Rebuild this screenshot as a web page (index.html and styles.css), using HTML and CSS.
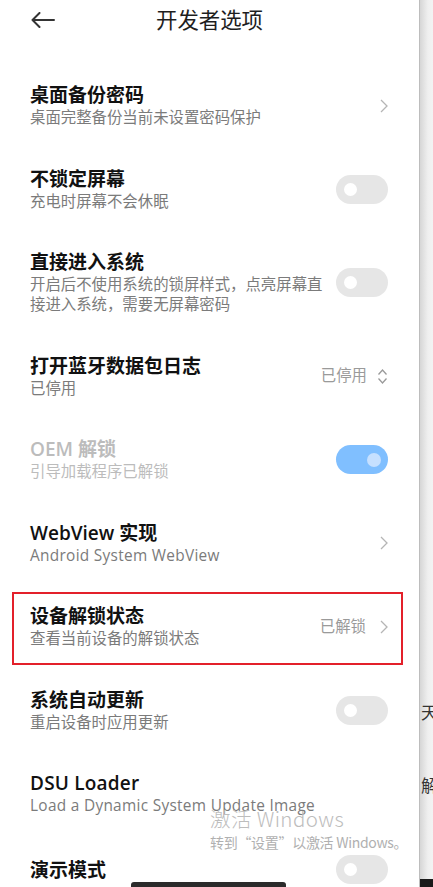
FILE: index.html
```html
<!DOCTYPE html>
<html lang="zh-CN">
<head>
<meta charset="utf-8">
<title>开发者选项</title>
<link rel="stylesheet" href="styles.css">
</head>
<body>
<div class="screen">
  <div class="phone">
    <header class="header">
      <svg class="back" width="24" height="16" viewBox="0 0 24 16"><path d="M1.5 8 H23 M8.5 1 L1.5 8 L8.5 15" fill="none" stroke="#333" stroke-width="2" stroke-linecap="round" stroke-linejoin="round"/></svg>
      <h1 class="title">开发者选项</h1>
    </header>
    <div class="list">
      <div class="row">
        <div class="text"><div class="t">桌面备份密码</div><div class="s">桌面完整备份当前未设置密码保护</div></div>
        <svg class="chev" width="8" height="14" viewBox="0 0 8 14"><path d="M1 1 L7 7 L1 13" fill="none" stroke="#b5b5b5" stroke-width="1.3"/></svg>
      </div>
      <div class="row">
        <div class="text"><div class="t">不锁定屏幕</div><div class="s">充电时屏幕不会休眠</div></div>
        <div class="toggle"><span class="knob"></span></div>
      </div>
      <div class="row">
        <div class="text"><div class="t">直接进入系统</div><div class="s">开启后不使用系统的锁屏样式，点亮屏幕直接进入系统，需要无屏幕密码</div></div>
        <div class="toggle"><span class="knob"></span></div>
      </div>
      <div class="row">
        <div class="text"><div class="t">打开蓝牙数据包日志</div><div class="s">已停用</div></div>
        <div class="value">已停用</div>
        <svg class="updown" width="11" height="17" viewBox="0 0 11 17"><path d="M1.5 6.5 L5.5 2 L9.5 6.5 M1.5 10.5 L5.5 15 L9.5 10.5" fill="none" stroke="#9a9a9a" stroke-width="1.3"/></svg>
      </div>
      <div class="row disabled">
        <div class="text"><div class="t">OEM 解锁</div><div class="s">引导加载程序已解锁</div></div>
        <div class="toggle on"><span class="knob"></span></div>
      </div>
      <div class="row">
        <div class="text"><div class="t">WebView 实现</div><div class="s latin">Android System WebView</div></div>
        <svg class="chev" width="8" height="14" viewBox="0 0 8 14"><path d="M1 1 L7 7 L1 13" fill="none" stroke="#b5b5b5" stroke-width="1.3"/></svg>
      </div>
      <div class="row marked">
        <div class="text"><div class="t">设备解锁状态</div><div class="s">查看当前设备的解锁状态</div></div>
        <div class="value">已解锁</div>
        <svg class="chev" width="8" height="14" viewBox="0 0 8 14"><path d="M1 1 L7 7 L1 13" fill="none" stroke="#b5b5b5" stroke-width="1.3"/></svg>
        <span class="redbox"></span>
      </div>
      <div class="row">
        <div class="text"><div class="t">系统自动更新</div><div class="s">重启设备时应用更新</div></div>
        <div class="toggle"><span class="knob"></span></div>
      </div>
      <div class="row">
        <div class="text"><div class="t latin-t">DSU Loader</div><div class="s latin">Load a Dynamic System Update Image</div></div>
      </div>
      <div class="row single">
        <div class="text"><div class="t">演示模式</div></div>
        <div class="toggle"><span class="knob"></span></div>
      </div>
    </div>
    <div class="watermark">
      <div class="wm1">激活 Windows</div>
      <div class="wm2">转到“设置”以激活 Windows。</div>
    </div>
    <div class="homebar"></div>
  </div>
  <div class="side">
    <span class="side-ch c1">天</span>
    <span class="side-ch c2">解</span>
    <span class="side-black"></span>
  </div>
</div>
</body>
</html>
```
FILE: styles.css
```css
* { box-sizing: border-box; }
html, body {
  margin: 0;
  padding: 0;
  width: 433px;
  height: 887px;
  overflow: hidden;
  background: #fff;
  font-family: "Open Sans", "Noto Sans CJK SC", sans-serif;
}
.screen {
  display: flex;
  width: 433px;
  height: 887px;
}
.phone {
  position: relative;
  width: 419px;
  height: 887px;
  overflow: hidden;
  background: #fff;
}
.header {
  position: relative;
  height: 40px;
  display: flex;
  align-items: center;
  justify-content: center;
}
.back {
  position: absolute;
  left: 31px;
  top: 12px;
}
.title {
  margin: 0;
  font-size: 21.4px;
  font-weight: 400;
  color: #1e1e1e;
  line-height: 28px;
}
.list {
  padding-top: 24px;
}
.row {
  position: relative;
  display: flex;
  align-items: center;
  padding: 19.25px 31px 19.25px 30px;
  gap: 10px;
}
.row.single {
  padding-top: 19.75px;
}
.text {
  flex: 1;
  min-width: 0;
}
.t {
  font-size: 19px;
  line-height: 24px;
  font-weight: 600;
  color: #111;
}
.t.latin-t { letter-spacing: 0.2px; }
.s {
  margin-top: 1px;
  font-size: 15.4px;
  line-height: 20px;
  color: #7b7b7b;
}
.s.latin { letter-spacing: 0.3px; }
.disabled .t, .disabled .s { color: #bcbcbc; }
.value {
  font-size: 15.4px;
  line-height: 20px;
  color: #9a9a9a;
}
.chev { flex: none; margin-left: 4px; }
.updown { flex: none; margin-left: 0; }
.toggle {
  flex: none;
  position: relative;
  width: 52px;
  height: 29px;
  border-radius: 14.5px;
  background: #e6e6e6;
  display: flex;
  align-items: center;
  padding-left: 7.5px;
}
.knob {
  width: 13px;
  height: 13px;
  border-radius: 50%;
  background: #fff;
}
.toggle.on {
  background: #80bfff;
  justify-content: flex-end;
  padding-left: 0;
  padding-right: 7.5px;
}
.toggle.on .knob { background: #c6e0ff; width: 14px; height: 14px; }
.redbox {
  position: absolute;
  left: 12px;
  top: 7.25px;
  width: 391px;
  height: 73px;
  border: 2px solid #e3202a;
  pointer-events: none;
}
.watermark {
  position: absolute;
  left: 210px;
  top: 805px;
  color: #b3b3b3;
  white-space: nowrap;
}
.wm1 {
  font-size: 20.5px;
  line-height: 26px;
  font-family: "Noto Sans CJK SC", sans-serif;
  font-weight: 300;
  color: #bdbdbd;
  letter-spacing: 0.4px;
}
.wm2 {
  font-size: 14px;
  line-height: 22px;
  font-family: "Noto Sans CJK SC", sans-serif;
  color: #b0b0b0;
  letter-spacing: -0.3px;
}
.homebar {
  position: absolute;
  left: 131px;
  top: 882px;
  width: 155px;
  height: 8px;
  border-radius: 3px;
  background: #2b2b2b;
}
.side {
  position: relative;
  width: 14px;
  height: 887px;
  overflow: hidden;
  border-left: 1px solid #bdbdbd;
  background: linear-gradient(to right, #d6d6d6, #efefef 60%, #f3f3f3);
}
.side-ch {
  position: absolute;
  left: 1px;
  font-family: "Noto Sans CJK SC", sans-serif;
  font-size: 17px;
  line-height: 20px;
  color: #333;
}
.c1 { top: 702px; }
.c2 { top: 775px; }
.side-black {
  position: absolute;
  left: 0;
  right: 0;
  top: 879px;
  bottom: 0;
  background: #1a1a1a;
}
```
